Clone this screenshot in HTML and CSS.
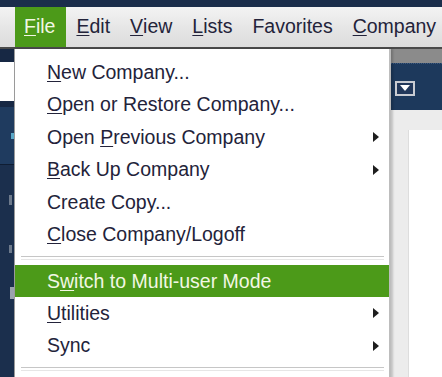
FILE: index.html
```html
<!DOCTYPE html>
<html>
<head>
<meta charset="utf-8">
<link rel="stylesheet" href="styles.css">
</head>
<body>
<div class="app">
  <div class="titlestrip"></div>
  <div class="menubar">
    <span class="mb-item active"><u>F</u>ile</span>
    <span class="mb-item"><u>E</u>dit</span>
    <span class="mb-item"><u>V</u>iew</span>
    <span class="mb-item"><u>L</u>ists</span>
    <span class="mb-item">Favorites</span>
    <span class="mb-item"><u>C</u>ompany</span>
  </div>
  <div class="workspace">
    <div class="sidebar">
      <div class="sb-top"></div>
      <div class="sb-search"></div>
      <div class="sb-gap"></div>
      <div class="sb-head"><span class="sb-mark"></span></div>
      <div class="sb-body">
        <span class="sb-dot d1"></span>
        <span class="sb-dot d2"></span>
        <span class="sb-dot d3"></span>
      </div>
    </div>
    <div class="main">
      <div class="main-band"></div>
      <div class="main-toolbar">
        <span class="dd-btn"><svg width="12" height="8" viewBox="0 0 12 8"><path d="M1 1 H11 L6 7 Z" fill="#ffffff"/></svg></span>
      </div>
      <div class="main-body">
        <div class="panel"></div>
      </div>
    </div>
  </div>

  <div class="dropdown">
    <div class="dd-item"><span><u>N</u>ew Company...</span></div>
    <div class="dd-item"><span><u>O</u>pen or Restore Company...</span></div>
    <div class="dd-item"><span>Open <u>P</u>revious Company</span><span class="arrow"></span></div>
    <div class="dd-item"><span><u>B</u>ack Up Company</span><span class="arrow"></span></div>
    <div class="dd-item"><span>Create Copy...</span></div>
    <div class="dd-item"><span><u>C</u>lose Company/Logoff</span></div>
    <div class="dd-sep"></div>
    <div class="dd-item hl"><span>S<u>w</u>itch to Multi-user Mode</span></div>
    <div class="dd-item"><span><u>U</u>tilities</span><span class="arrow"></span></div>
    <div class="dd-item"><span>Sync</span><span class="arrow"></span></div>
    <div class="dd-sep"></div>
    <div class="dd-item"><span>&nbsp;</span></div>
  </div>
</div>
</body>
</html>
```

FILE: styles.css
```css
* { box-sizing: border-box; }
html, body { margin: 0; padding: 0; }
body {
  width: 442px;
  height: 377px;
  overflow: hidden;
  font-family: "Liberation Sans", Arial, sans-serif;
  background: #1b2f4d;
}
.app {
  position: relative;
  width: 442px;
  height: 377px;
  display: flex;
  flex-direction: column;
  overflow: hidden;
}
.titlestrip {
  height: 7px;
  background: #1b2e4b;
  flex: none;
}
.menubar {
  height: 42px;
  flex: none;
  display: flex;
  align-items: stretch;
  padding-left: 15px;
  background: linear-gradient(#f3f3f3, #e4e4e4 60%, #dcdcdc);
  border-bottom: 2px solid #4a4a4a;
}
.mb-item {
  display: flex;
  align-items: center;
  padding: 0 10px;
  font-size: 19.5px;
  color: #23233a;
  padding-bottom: 1px;
}
.mb-item.active {
  background: #4c9a19;
  color: #f2f7e4;
  padding-left: 9px;
  padding-right: 11px;
}
u { text-decoration-thickness: 1px; text-underline-offset: 2px; }

.workspace {
  flex: 1;
  display: flex;
  min-height: 0;
}
.sidebar {
  width: 14px;
  flex: none;
  display: flex;
  flex-direction: column;
  background: #1b2f4d;
}
.sb-top { height: 13px; background: #172844; }
.sb-search { height: 39px; background: #ffffff; }
.sb-gap { height: 6px; background: #172844; }
.sb-head {
  height: 58px;
  background: #1f3b5f;
  border-bottom: 1px solid #0f1d33;
  position: relative;
}
.sb-mark {
  position: absolute;
  left: 11px;
  top: 26px;
  width: 3px;
  height: 6px;
  background: #5aa8c8;
}
.sb-body { flex: 1; position: relative; }
.sb-dot {
  position: absolute;
  right: 2px;
  width: 3px;
  background: #6d7a8c;
}
.d1 { top: 30px; height: 10px; }
.d2 { top: 80px; height: 8px; }
.d3 { top: 122px; height: 12px; right: 0; width: 4px; background: #9aa2ad; }

.main {
  flex: 1;
  display: flex;
  flex-direction: column;
}
.main-band {
  height: 14px;
  flex: none;
  background: #8b8b8b;
}
.main-toolbar {
  height: 47px;
  flex: none;
  background: #1d395c;
  border-top: 1px dotted #3d5a80;
  display: flex;
  justify-content: flex-end;
  align-items: center;
  padding-right: 27px;
  padding-top: 2px;
}
.dd-btn {
  width: 20px;
  height: 15px;
  border: 2px solid #c9ccd2;
  background: #22385a;
  display: flex;
  align-items: center;
  justify-content: center;
}
.main-body {
  flex: 1;
  background: #ececec;
  padding: 20px 0 0 394px;
}
.panel {
  height: 100%;
  background: #ffffff;
  border-left: 1px solid #dddddd;
}

.dropdown {
  position: absolute;
  top: 49px;
  left: 14px;
  width: 375px;
  background: #ffffff;
  border-left: 1px solid #9a9a9a;
  box-shadow: 2px 0 0 #bdbdbd, 4px 0 2px rgba(0,0,0,0.18);
  padding-top: 7px;
}
.dd-item {
  height: 32.5px;
  display: flex;
  align-items: center;
  justify-content: space-between;
  padding: 0 10px 0 32px;
  font-size: 19.5px;
  color: #23233a;
  white-space: nowrap;
}
.dd-item.hl {
  height: 32px;
  background: #4c9a19;
  color: #f2f7e4;
}
.arrow {
  width: 0;
  height: 0;
  border-top: 5px solid transparent;
  border-bottom: 5px solid transparent;
  border-left: 6px solid #1e1e1e;
}
.dd-sep {
  height: 14px;
  margin: 0 5px 0 6px;
  display: flex;
  align-items: center;
}
.dd-sep::before {
  content: "";
  display: block;
  width: 100%;
  height: 2px;
  border-top: 1px solid #c6c6c6;
  border-bottom: 1px solid #e6e6e6;
}
```
